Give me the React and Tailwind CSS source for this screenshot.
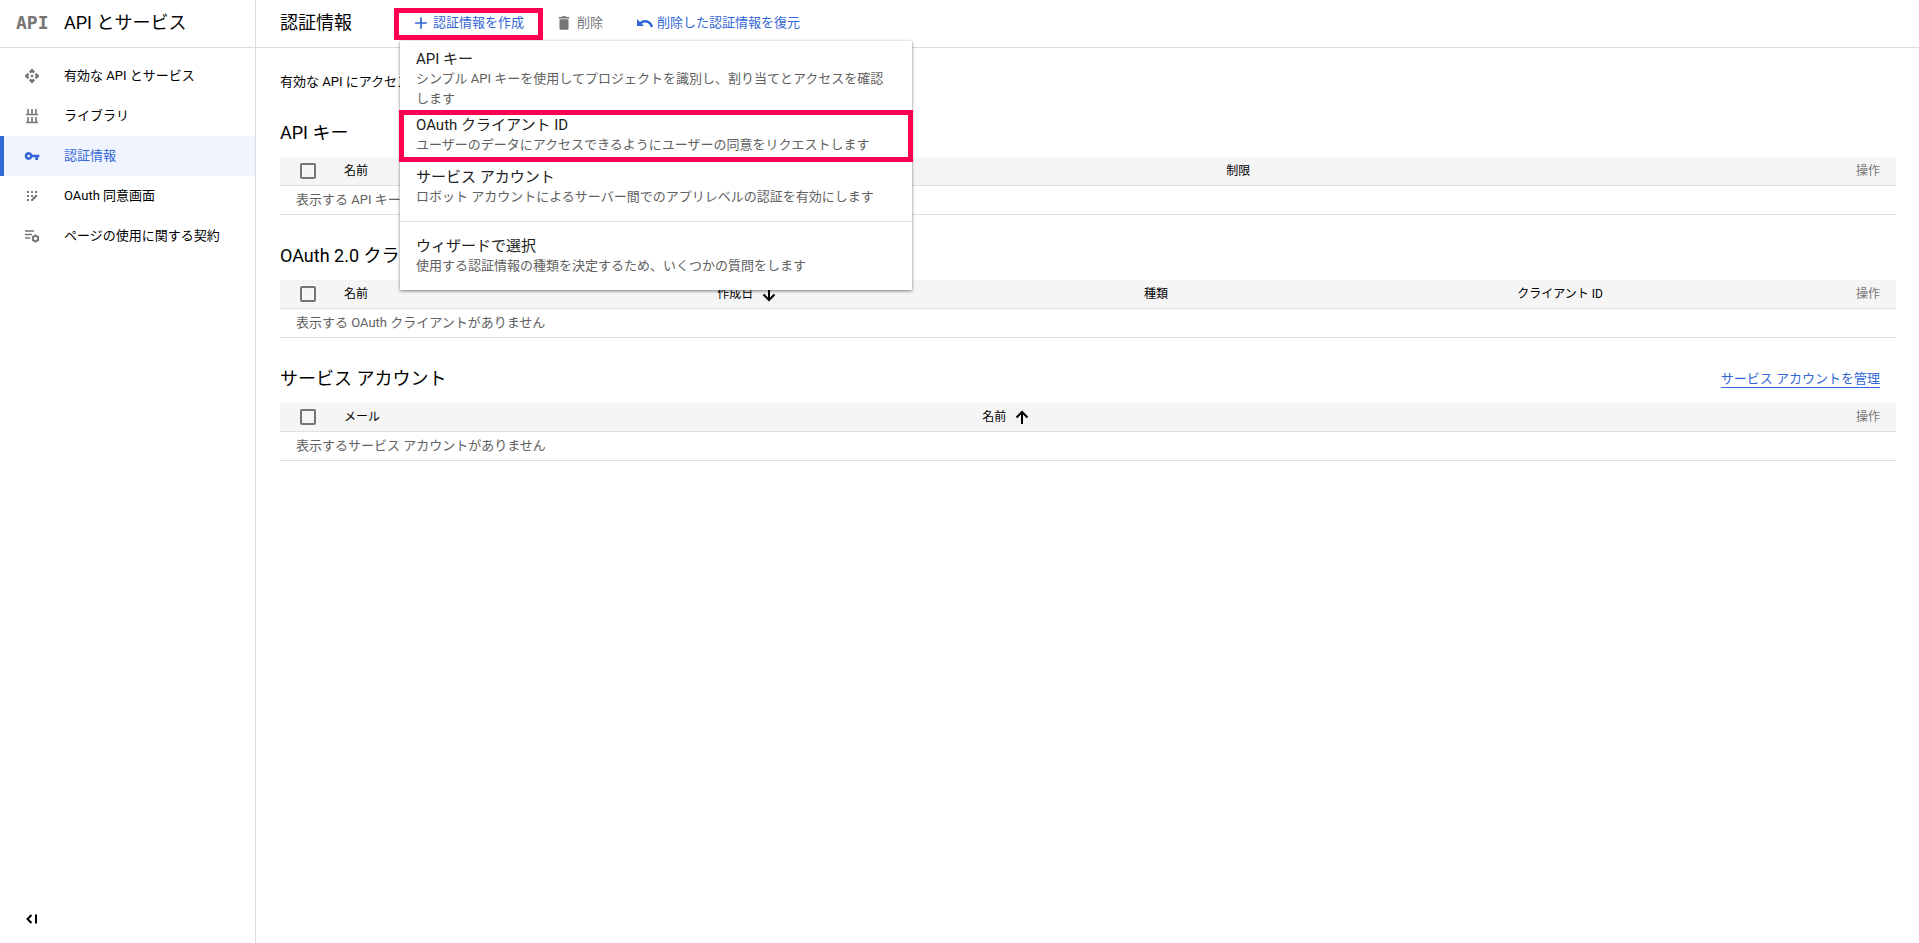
import { useState } from "react";
import { MdAdd, MdDelete, MdVpnKey } from "react-icons/md";

function ApiIcon() {
  return (
    <svg viewBox="0 0 16 16" className="w-4 h-4" fill="currentColor">
      <path d="M8 .5l3 3-1.600 2L8 4.200 6.600 5.500 5 3.500z" />
      <path d="M15.500 8l-3 3-2-1.600L11.800 8l-1.300-1.400 2-1.600z" />
      <path d="M8 15.500l-3-3 1.600-2L8 11.800l1.400-1.300 1.600 2z" />
      <path d="M.5 8l3-3 2 1.600L4.200 8l1.300 1.400-2 1.600z" />
      <circle cx="8" cy="8" r="1.300" />
    </svg>
  );
}

function LibraryIcon() {
  return (
    <svg viewBox="0 0 16 16" className="w-4 h-4" fill="none" stroke="currentColor">
      <path d="M2 6.500h12M2 14.500h12" strokeWidth="1.400" />
      <path d="M4 1v6M8 1v6M12 1v6M4 9v6M8 9v6M12 9v6" strokeWidth="1.600" />
    </svg>
  );
}

function ConsentIcon() {
  return (
    <svg viewBox="0 0 16 16" className="w-4 h-4" fill="currentColor">
      <path d="M3 3h2v2H3zM7 3h2v2H7zM11 3h2v2h-2zM3 7h2v2H3zM7 7h2v2H7zM3 11h2v2H3z" />
      <path d="M7 13v-1.600l5-5L13.600 8l-5 5z" />
    </svg>
  );
}

function AgreementIcon() {
  return (
    <svg viewBox="0 0 16 16" className="w-4 h-4" fill="none" stroke="currentColor">
      <path d="M1 3h9M1 6.500h7M1 10h5" strokeWidth="1.600" />
      <circle cx="11.500" cy="10.500" r="2.600" strokeWidth="1.800" />
      <path
        d="M11.500 6.500v1.500M11.500 13v1.500M8 8.500l1.300.8M13.700 11.700l1.300.8M8 12.500l1.300-.8M13.700 9.300l1.300-.8"
        strokeWidth="1.800"
      />
    </svg>
  );
}

function RestoreIcon() {
  return (
    <svg viewBox="0 0 16 16" className="w-4 h-4">
      <path d="M0 4v7h7z" fill="currentColor" />
      <path d="M3 8.500C7 5 13 5.500 15 12" fill="none" stroke="currentColor" strokeWidth="2.400" />
    </svg>
  );
}

function CollapseIcon() {
  return (
    <svg viewBox="0 0 12 12" className="w-3 h-3" fill="none" stroke="currentColor" strokeWidth="2">
      <path d="M5.500 2L1.500 6l4 4M10 1.500v9" />
    </svg>
  );
}

function SortIcon({ direction }) {
  return (
    <svg viewBox="0 0 20 20" className="w-5 h-5" fill="none" stroke="currentColor" strokeWidth="2">
      {direction === "up" ? (
        <path d="M10 17V5M4.500 10.500L10 5l5.500 5.500" />
      ) : (
        <path d="M10 4v12M4.500 10.500L10 16l5.500-5.500" />
      )}
    </svg>
  );
}

const navItems = [
  { label: "有効な API とサービス", icon: ApiIcon },
  { label: "ライブラリ", icon: LibraryIcon },
  { label: "認証情報", icon: MdVpnKey, active: true },
  { label: "OAuth 同意画面", icon: ConsentIcon },
  { label: "ページの使用に関する契約", icon: AgreementIcon },
];

const menuItems = [
  {
    title: "API キー",
    text: "シンプル API キーを使用してプロジェクトを識別し、割り当てとアクセスを確認します",
    className: "pt-2 pb-0.5",
  },
  {
    title: "OAuth クライアント ID",
    text: "ユーザーのデータにアクセスできるようにユーザーの同意をリクエストします",
    className: "pt-1 pb-[6px] outline-5 -outline-offset-4 outline-[#ff0050]",
  },
  {
    title: "サービス アカウント",
    text: "ロボット アカウントによるサーバー間でのアプリレベルの認証を有効にします",
    className: "pt-[6px] pb-[14px]",
  },
  {
    title: "ウィザードで選択",
    text: "使用する認証情報の種類を決定するため、いくつかの質問をします",
    className: "border-t border-[#e0e0e0] pt-[14px] pb-[14px]",
  },
];

const tables = [
  {
    title: "API キー",
    empty: "表示する API キーがありません",
    columns: [
      { label: "名前", width: "w-[27.3%]" },
      { label: "作成日", width: "w-[27.3%]", sort: "down" },
      { label: "制限" },
    ],
  },
  {
    title: "OAuth 2.0 クライアント ID",
    empty: "表示する OAuth クライアントがありません",
    columns: [
      { label: "名前", width: "w-[23.1%]" },
      { label: "作成日", width: "w-[26.4%]", sort: "down" },
      { label: "種類", width: "w-[23.1%]" },
      { label: "クライアント ID" },
    ],
  },
  {
    title: "サービス アカウント",
    empty: "表示するサービス アカウントがありません",
    link: "サービス アカウントを管理",
    columns: [
      { label: "メール", width: "w-[39.5%]" },
      { label: "名前", sort: "up" },
    ],
  },
];

function Sidebar() {
  return (
    <aside className="w-64 shrink-0 border-r border-[#dadce0] flex flex-col">
      <div className="h-12 border-b border-[#dadce0] flex items-center pl-4 pb-0.5">
        <span className="w-12 font-['DejaVu_Sans_Mono',monospace] text-lg leading-6 font-bold text-[#757575]">
          API
        </span>
        <h2 className="text-lg leading-6">API とサービス</h2>
      </div>
      <nav className="pt-2">
        {navItems.map(({ label, icon: Icon, active }) => (
          <a
            key={label}
            href="#"
            className={
              active
                ? "h-10 flex items-center gap-6 pl-5 border-l-4 border-[#3367d6] bg-[#f0f4ff] text-[#3367d6]"
                : "h-10 flex items-center gap-6 pl-6"
            }
          >
            <span className={active ? "text-[#3367d6]" : "text-[#757575]"}>
              <Icon className="w-4 h-4" />
            </span>
            {label}
          </a>
        ))}
      </nav>
      <button
        type="button"
        className="mt-auto mb-4 ml-6 w-4 h-4 flex items-center justify-center"
        aria-label="メニューを閉じる"
      >
        <CollapseIcon />
      </button>
    </aside>
  );
}

function CreateMenu() {
  return (
    <div
      role="menu"
      className="absolute left-[6px] top-[33px] z-10 w-lg bg-white text-left shadow-[0_1px_3px_rgba(0,0,0,0.5)]"
    >
      {menuItems.map((item) => (
        <button
          key={item.title}
          type="button"
          role="menuitem"
          className={`block w-full px-4 text-left ${item.className}`}
        >
          <span className="block text-[15px] leading-5 text-[#212121]">{item.title}</span>
          <span className="block leading-5 text-[#616161]">{item.text}</span>
        </button>
      ))}
    </div>
  );
}

function CredentialTable({ table }) {
  return (
    <section className="mt-[27px]">
      <div className="h-7 mb-[10px] flex items-center justify-between pr-4">
        <h2 className="text-lg leading-7">{table.title}</h2>
        {table.link ? (
          <a href="#" className="text-[#3367d6] border-b border-[#3367d6] leading-4">
            {table.link}
          </a>
        ) : null}
      </div>
      <table className="w-full table-fixed border-separate border-spacing-0 text-left">
        <thead className="bg-[#f5f5f5] text-xs">
          <tr>
            <th className="w-16 h-[29px] pl-5 border-b border-[#e0e0e0]">
              <input
                type="checkbox"
                aria-label={`${table.title}をすべて選択`}
                className="block appearance-none w-4 h-4 border-2 border-[#757575] rounded-xs"
              />
            </th>
            {table.columns.map((col) => (
              <th
                key={col.label}
                className={`border-b border-[#e0e0e0] font-normal ${col.width ?? ""}`}
              >
                <span className="flex items-center gap-[6px]">
                  {col.label}
                  {col.sort ? <SortIcon direction={col.sort} /> : null}
                </span>
              </th>
            ))}
            <th className="w-20 pr-4 border-b border-[#e0e0e0] text-right font-normal text-[#757575]">
              操作
            </th>
          </tr>
        </thead>
        <tbody>
          <tr>
            <td
              colSpan={table.columns.length + 2}
              className="h-[29px] pl-4 border-b border-[#e0e0e0] text-[#616161]"
            >
              {table.empty}
            </td>
          </tr>
        </tbody>
      </table>
    </section>
  );
}

export default function App() {
  const [menuOpen, setMenuOpen] = useState(true);

  return (
    <div className="min-h-screen flex bg-white text-black text-[13px] leading-5 font-[Roboto,'Noto_Sans_CJK_JP',sans-serif]">
      <Sidebar />
      <div className="flex-1 min-w-0">
        <header className="h-12 border-b border-[#dadce0] flex items-center pl-6">
          <h1 className="w-[114px] pb-0.5 text-lg leading-6">認証情報</h1>
          <div className="relative">
            <button
              type="button"
              onClick={() => setMenuOpen(!menuOpen)}
              className="h-8 w-[149px] pb-0.5 pr-0.5 border-5 border-[#ff0050] flex items-center justify-center gap-0.5 text-[#3367d6]"
            >
              <MdAdd className="w-5 h-5" />
              認証情報を作成
            </button>
            {menuOpen ? <CreateMenu /> : null}
          </div>
          <button type="button" className="ml-3 pb-0.5 flex items-center gap-1 text-[#757575]">
            <MdDelete className="w-[18px] h-[18px]" />
            削除
          </button>
          <button type="button" className="ml-[34px] pb-0.5 flex items-center gap-1 text-[#3367d6]">
            <RestoreIcon />
            削除した認証情報を復元
          </button>
        </header>
        <main className="pl-6 pr-[23px] pt-6">
          <p>有効な API にアクセスするための認証情報を作成します。</p>
          {tables.map((table) => (
            <CredentialTable key={table.title} table={table} />
          ))}
        </main>
      </div>
    </div>
  );
}
